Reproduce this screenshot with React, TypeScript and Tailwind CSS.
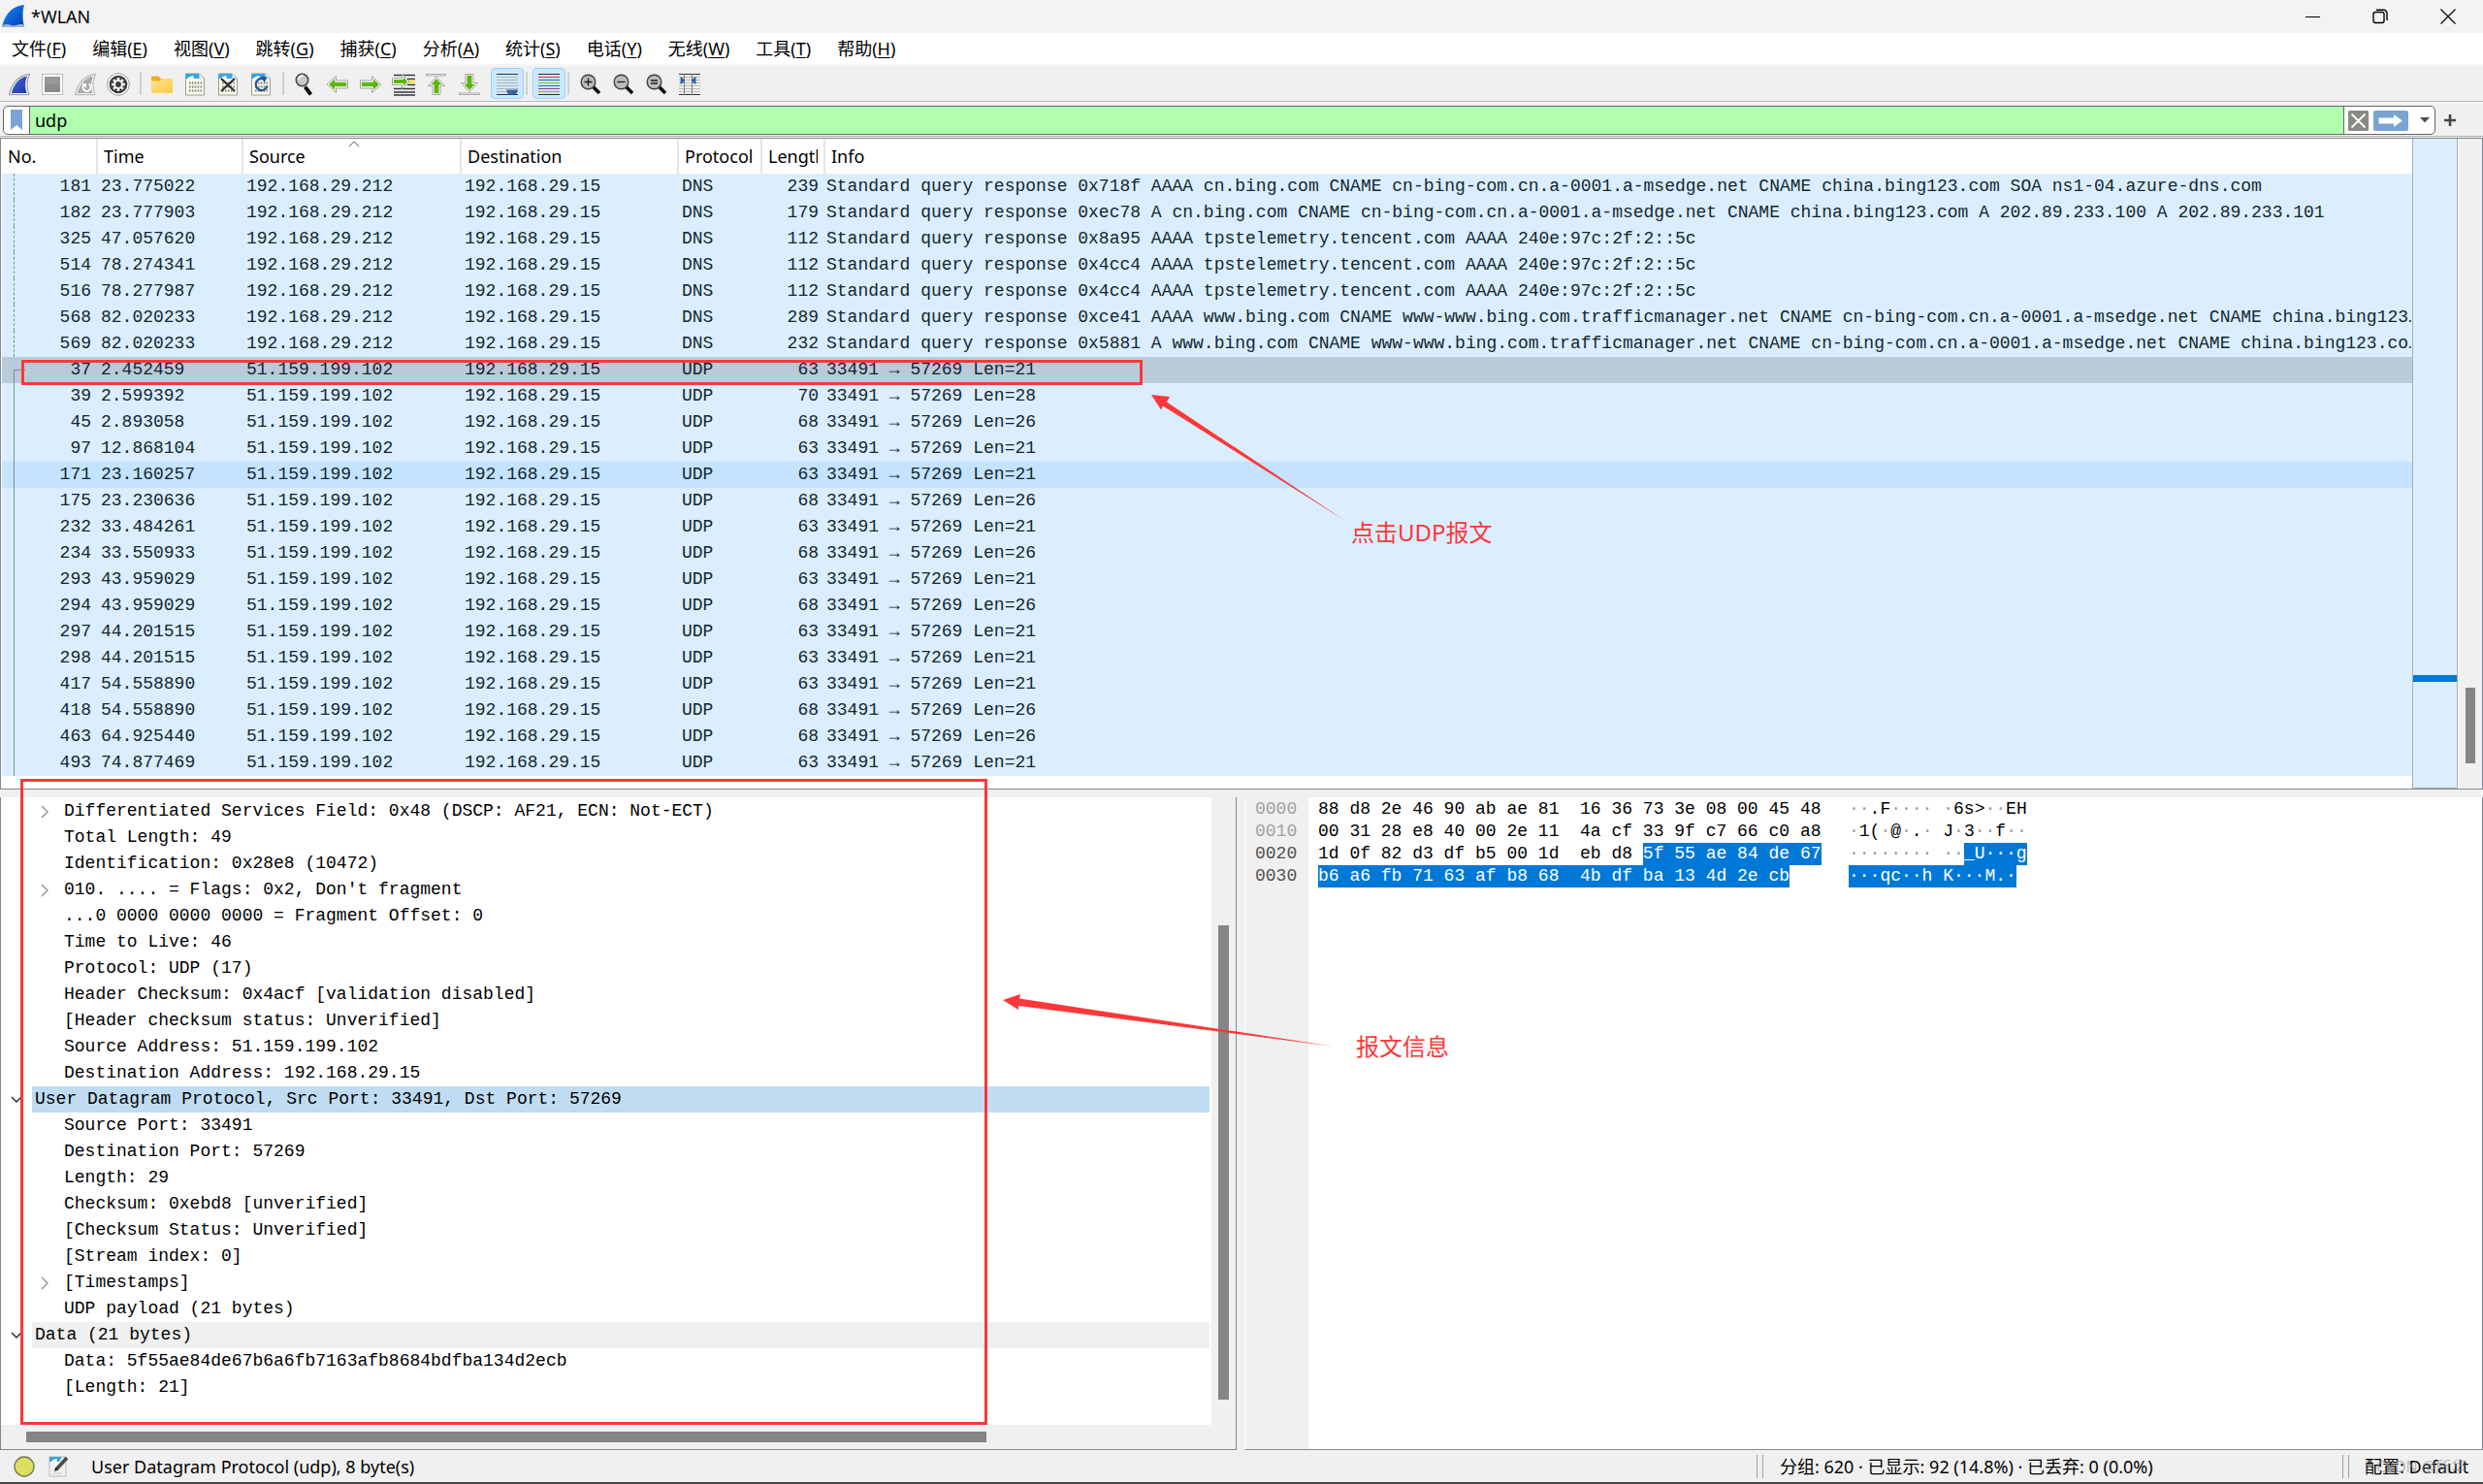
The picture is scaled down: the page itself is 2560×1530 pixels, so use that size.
import React from "react";

const UI = "font-['Noto_Sans','Noto_Sans_CJK_SC',sans-serif]";
const MONO = "font-['Liberation_Mono','DejaVu_Sans_Mono',monospace]";

const menus: [string, string][] = [
  ["文件", "F"], ["编辑", "E"], ["视图", "V"], ["跳转", "G"], ["捕获", "C"], ["分析", "A"],
  ["统计", "S"], ["电话", "Y"], ["无线", "W"], ["工具", "T"], ["帮助", "H"],
];

type Packet = { no: number; time: string; src: string; proto: string; len: number; info: string };

const dns = (no: number, time: string, len: number, info: string): Packet => ({
  no, time, src: "192.168.29.212", proto: "DNS", len, info: `Standard query response ${info}`,
});
const udp = (no: number, time: string, len: number): Packet => ({
  no, time, src: "51.159.199.102", proto: "UDP", len, info: `33491 → 57269 Len=${len - 42}`,
});

const packets: Packet[] = [
  dns(181, "23.775022", 239, "0x718f AAAA cn.bing.com CNAME cn-bing-com.cn.a-0001.a-msedge.net CNAME china.bing123.com SOA ns1-04.azure-dns.com"),
  dns(182, "23.777903", 179, "0xec78 A cn.bing.com CNAME cn-bing-com.cn.a-0001.a-msedge.net CNAME china.bing123.com A 202.89.233.100 A 202.89.233.101"),
  dns(325, "47.057620", 112, "0x8a95 AAAA tpstelemetry.tencent.com AAAA 240e:97c:2f:2::5c"),
  dns(514, "78.274341", 112, "0x4cc4 AAAA tpstelemetry.tencent.com AAAA 240e:97c:2f:2::5c"),
  dns(516, "78.277987", 112, "0x4cc4 AAAA tpstelemetry.tencent.com AAAA 240e:97c:2f:2::5c"),
  dns(568, "82.020233", 289, "0xce41 AAAA www.bing.com CNAME www-www.bing.com.trafficmanager.net CNAME cn-bing-com.cn.a-0001.a-msedge.net CNAME china.bing123…"),
  dns(569, "82.020233", 232, "0x5881 A www.bing.com CNAME www-www.bing.com.trafficmanager.net CNAME cn-bing-com.cn.a-0001.a-msedge.net CNAME china.bing123.co…"),
  udp(37, "2.452459", 63), udp(39, "2.599392", 70), udp(45, "2.893058", 68), udp(97, "12.868104", 63),
  udp(171, "23.160257", 63), udp(175, "23.230636", 68), udp(232, "33.484261", 63), udp(234, "33.550933", 68),
  udp(293, "43.959029", 63), udp(294, "43.959029", 68), udp(297, "44.201515", 63), udp(298, "44.201515", 63),
  udp(417, "54.558890", 63), udp(418, "54.558890", 68), udp(463, "64.925440", 68), udp(493, "74.877469", 63),
];

type Node = { text: string; top?: boolean; closed?: boolean; bg?: string };
const details: Node[] = [
  { text: "Differentiated Services Field: 0x48 (DSCP: AF21, ECN: Not-ECT)", closed: true },
  { text: "Total Length: 49" },
  { text: "Identification: 0x28e8 (10472)" },
  { text: "010. .... = Flags: 0x2, Don't fragment", closed: true },
  { text: "...0 0000 0000 0000 = Fragment Offset: 0" },
  { text: "Time to Live: 46" },
  { text: "Protocol: UDP (17)" },
  { text: "Header Checksum: 0x4acf [validation disabled]" },
  { text: "[Header checksum status: Unverified]" },
  { text: "Source Address: 51.159.199.102" },
  { text: "Destination Address: 192.168.29.15" },
  { text: "User Datagram Protocol, Src Port: 33491, Dst Port: 57269", top: true, bg: "bg-[#c0dcf3]" },
  { text: "Source Port: 33491" },
  { text: "Destination Port: 57269" },
  { text: "Length: 29" },
  { text: "Checksum: 0xebd8 [unverified]" },
  { text: "[Checksum Status: Unverified]" },
  { text: "[Stream index: 0]" },
  { text: "[Timestamps]", closed: true },
  { text: "UDP payload (21 bytes)" },
  { text: "Data (21 bytes)", top: true, bg: "bg-[#f0f0f0]" },
  { text: "Data: 5f55ae84de67b6a6fb7163afb8684bdfba134d2ecb" },
  { text: "[Length: 21]" },
];

/* Each dump line: offset, plain hex, selected hex, plain text, selected text */
const dump: [string, string, string, string, string][] = [
  ["0000", "88 d8 2e 46 90 ab ae 81  16 36 73 3e 08 00 45 48", "", "··.F···· ·6s>··EH", ""],
  ["0010", "00 31 28 e8 40 00 2e 11  4a cf 33 9f c7 66 c0 a8", "", "·1(·@·.· J·3··f··", ""],
  ["0020", "1d 0f 82 d3 df b5 00 1d  eb d8 ", "5f 55 ae 84 de 67", "········ ··", "_U···g"],
  ["0030", "", "b6 a6 fb 71 63 af b8 68  4b df ba 13 4d 2e cb", "", "···qc··h K···M.·"],
];

const Svg = ({ children, w = 24, h = 24 }: { children: React.ReactNode; w?: number; h?: number }) => (
  <svg width={w} height={h} viewBox={`0 0 ${w} ${h}`} fill="none" aria-hidden="true" className="shrink-0">{children}</svg>
);

const FIN = "M1.5 22.5C4 12.500 9 3 22.500 1.500C19.500 8 19 15 22 22.500Z";

const FinIcon = () => (
  <Svg>
    <defs><linearGradient id="fin" x1="0" y1="0" x2="1" y2="1"><stop offset="0" stopColor="#5b7fe0" /><stop offset=".5" stopColor="#2f4fc0" /><stop offset="1" stopColor="#2236a8" /></linearGradient></defs>
    <path d={FIN} fill="#fff" stroke="#a9a9a9" strokeWidth="1.300" strokeLinejoin="round" />
    <path d="M3.800 21C6 12.500 11 5 20 3.400C17.500 9.500 17.500 15 19.600 21Z" fill="url(#fin)" />
  </Svg>
);
const StopIcon = () => (
  <Svg>
    <rect x="1.500" y="1.500" width="21" height="21" fill="#fff" stroke="#bdbdbd" />
    <rect x="4" y="4" width="16" height="16" fill="#8c8c8c" />
    <path d="M4 4h16v8H4z" fill="#979797" />
  </Svg>
);
const RestartIcon = () => (
  <Svg>
    <path d={FIN} fill="#fff" stroke="#bdbdbd" strokeWidth="1.300" strokeLinejoin="round" />
    <path d="M3.800 21C6 12.500 11 5 20 3.400C17.500 9.500 17.500 15 19.600 21Z" fill="#a9a9a9" />
    <path d="M15.500 11.500a4 4 0 1 1-5.500 1.500" stroke="#fff" strokeWidth="2" />
    <path d="M8 11h5v5z" fill="#fff" />
  </Svg>
);
const GearIcon = () => (
  <Svg>
    <circle cx="12" cy="12" r="11.300" fill="#fff" stroke="#999" />
    <circle cx="12" cy="12" r="9.300" fill="#3a3d3e" />
    <g stroke="#f2f2f2" strokeWidth="2.600">
      <path d="M12 5v14M5 12h14M7.050 7.050l9.900 9.900M16.950 7.050l-9.900 9.900" />
    </g>
    <circle cx="12" cy="12" r="5" fill="#f2f2f2" />
    <circle cx="12" cy="12" r="2.900" fill="#3a3d3e" />
  </Svg>
);
const FolderIcon = () => (
  <Svg>
    <path d="M1 4.500Q1 3.500 2 3.500h6.500l2.500 3H22q1 0 1 1V11H1z" fill="#f0ab1c" />
    <defs><linearGradient id="fold" x1="0" y1="0" x2="1" y2="1"><stop offset="0" stopColor="#ffe597" /><stop offset="1" stopColor="#ffca3e" /></linearGradient></defs>
    <path d="M1 8.500h8.500l2-2H22q1 0 1 1V20q0 1-1 1H2q-1 0-1-1z" fill="url(#fold)" />
  </Svg>
);
const FileBase = ({ children }: { children?: React.ReactNode }) => (
  <Svg>
    <path d="M2.500 1h14l5 5v17h-19z" fill="#fdfdea" stroke="#9b9b94" />
    <path d="M2.500 1h14l5 5H2.500z" fill="#35a7df" />
    <path d="M16.500 1v5h5z" fill="#e8f4fb" stroke="#a9c4cf" strokeWidth=".6" />
    <path d="M4 6c2-2 5-3 7-3-1 1-1 2 0 3z" fill="#fff" />
    <g stroke="#8d8f86" strokeWidth="2.600" strokeDasharray="1.600 1.300">
      <path d="M6 10.500h13M6 14.500h13M6 18.500h13" />
    </g>
    {children}
  </Svg>
);
const CloseFileIcon = () => <FileBase><path d="M5 6l14 13M19 6L5 19" stroke="#2b3134" strokeWidth="2.200" /></FileBase>;
const ReloadIcon = () => (
  <FileBase>
    <path d="M16.500 7.500a6 6 0 1 0 2 6" stroke="#27509b" strokeWidth="2.300" />
    <path d="M12.500 3.500l6 1-3 6z" fill="#27509b" />
  </FileBase>
);
const FindIcon = () => (
  <Svg>
    <path d="M12.500 14.500l6 8" stroke="#0b0b0b" strokeWidth="3.800" />
    <circle cx="9.500" cy="7.500" r="6.200" fill="#c9c9c9" stroke="#454545" strokeWidth="1.600" />
    <path d="M5.500 7a4 4 0 0 1 5-3.700" stroke="#fff" strokeWidth="1.800" />
  </Svg>
);
const ArrowG = ({ d, inner }: { d: string; inner: string }) => (
  <>
    <path d={d} fill="#fff" stroke="#a2a2a2" strokeLinejoin="round" />
    <path d={inner} fill="#5fb512" />
  </>
);
const PrevIcon = () => <Svg><ArrowG d="M1 12L10.500 3.500v4.500H22.500v8H10.500v4.500z" inner="M3 12L9.200 6.300V9.700H21.200v4.600H9.200v3.400z" /></Svg>;
const NextIcon = () => <Svg><ArrowG d="M23 12L13.500 3.500v4.500H1.500v8h12v4.500z" inner="M21 12L14.800 6.300V9.700H2.800v4.600h12v3.400z" /></Svg>;
const GotoIcon = () => (
  <Svg>
    <path d="M2 2.500h22M16 6.500h8M16 12.500h8M2 16.500h22M2 20h22M2 23h22" stroke="#33383b" strokeWidth="1.400" />
    <path d="M16 9h8" stroke="#fbe04a" strokeWidth="3" />
    <ArrowG d="M18 9L10.500 1.500v4H.5v7h10v4z" inner="M16.200 9L11.800 4.300V7H1.800v4h10v2.700z" />
  </Svg>
);
const TopIcon = () => (
  <Svg>
    <rect x="1.500" y="1.500" width="20" height="1.500" fill="#fff" stroke="#999" strokeWidth=".8" />
    <ArrowG d="M12 4L3.500 13.500h4.500v9h8v-9h4.500z" inner="M12 6L6.300 12.200h3.200v9h5v-9h3.200z" />
  </Svg>
);
const BottomIcon = () => (
  <Svg>
    <rect x="1.500" y="21" width="21" height="1.500" fill="#fff" stroke="#999" strokeWidth=".8" />
    <ArrowG d="M12 20L3.500 10.500h4.500v-9h8v9h4.500z" inner="M12 18L6.300 11.800h3.200V2.800h5v9h3.200z" />
  </Svg>
);
const ScrollIcon = () => (
  <Svg>
    <path d="M1 1.500h22M1 22.500h22" stroke="#2c3236" />
    <path d="M1 4.500h22M1 7.500h22M1 10.500h22M1 13.500h22M1 16.500h22M1 19.500h22" stroke="#b3b5ae" />
    <path d="M11 17.500h12q-1 5-4 5h-4q-3 0-4-5z" fill="#3465a4" />
  </Svg>
);
const ColorIcon = () => (
  <Svg>
    <path d="M1 1.500h22M1 22.500h22" stroke="#2c3236" />
    <path d="M1 4.500h22" stroke="#ef2929" />
    <path d="M1 7.500h22M1 13.500h22" stroke="#3465a4" />
    <path d="M1 10.500h22" stroke="#73d216" />
    <path d="M1 16.500h22" stroke="#75507b" />
    <path d="M1 19.500h22" stroke="#c4a000" />
  </Svg>
);
const Zoom = ({ d }: { d: string }) => (
  <Svg>
    <path d="M14.500 14.500l6.500 6.500" stroke="#0b0b0b" strokeWidth="3.600" />
    <circle cx="9.500" cy="9.500" r="7.300" fill="#bcbcbc" stroke="#3d3d3d" strokeWidth="1.400" />
    <path d={d} stroke="#1d1d1d" strokeWidth="1.300" />
  </Svg>
);
const ResizeIcon = () => (
  <Svg>
    <path d="M1 1.500h22M1 22.500h22" stroke="#2c3236" />
    <path d="M1 4.500h22M1 7.500h22M1 10.500h22M1 13.500h22M1 16.500h22M1 19.500h22" stroke="#b9bbb4" />
    <path d="M6.500 1v22M14.500 1v22" stroke="#7c7f7a" />
    <path d="M3 4.500l4 3.500-4 3.500zM18 4.500l-4 3.500 4 3.500z" fill="#3465a4" stroke="#3465a4" />
  </Svg>
);

const Tool = ({ label, children, on }: { label: string; children: React.ReactNode; on?: boolean }) => (
  <button
    type="button"
    aria-label={label}
    aria-pressed={on}
    className={`flex h-8 w-[34px] items-center justify-center pt-0.5 ${on ? "rounded-sm border border-[#99d1ff] bg-[#cce8ff]" : ""}`}
  >
    {children}
  </button>
);
const Sep = ({ tight }: { tight?: boolean }) => <span className={`h-6 w-0.5 bg-[#d0d0d0] ${tight ? "mr-[5px] ml-0.5" : "mr-1 ml-[5px]"}`} />;

const Th = ({ children, sorted }: { children: React.ReactNode; sorted?: boolean }) => (
  <th scope="col" aria-sort={sorted ? "ascending" : undefined} className="relative h-9 overflow-hidden border-r-2 border-[#e5e5e5] px-1.5 text-left font-normal last:border-r-0">
    {sorted && (
      <svg width="12" height="7" viewBox="0 0 12 7" fill="none" className="absolute top-0.5 left-1/2 -ml-1" aria-hidden="true">
        <path d="M1 6l5-5 5 5" stroke="#5c5c5c" />
      </svg>
    )}
    <div className="overflow-hidden whitespace-nowrap">{children}</div>
  </th>
);

const Glyphs = ({ text }: { text: string }) => (
  <>
    {text.split(/(·+)/).map((part, i) => (
      <span key={i} className={part.startsWith("·") ? "text-[#9a9a9a]" : ""}>{part}</span>
    ))}
  </>
);

function PacketList() {
  return (
    <section aria-label="Packet list" className="flex border border-[#828790] bg-white pl-px">
      <div className="min-w-0 flex-1 pb-[13px]">
        <table className={`w-full table-fixed border-collapse ${MONO} text-[18px] leading-[27px] text-[#12272e]`}>
          <colgroup>
            <col className="w-[98px]" /><col className="w-[150px]" /><col className="w-[225px]" /><col className="w-[224px]" />
            <col className="w-[86px]" /><col className="w-[65px]" /><col />
          </colgroup>
          <thead className={`${UI} text-[18px] text-black`}>
            <tr>
              <Th>No.</Th><Th>Time</Th><Th sorted>Source</Th><Th>Destination</Th><Th>Protocol</Th><Th>Length</Th><Th>Info</Th>
            </tr>
          </thead>
          <tbody>
            {packets.map((p) => {
              const bg = p.no === 37 ? "bg-[#b9cbd9]" : p.no === 171 ? "bg-[#c4e3ff]" : "bg-[#daeeff]";
              const line =
                p.proto === "DNS" ? "inset-y-0 border-l border-dashed"
                : p.no === 37 ? "top-[13px] bottom-0 w-3 border-l border-t"
                : "inset-y-0 border-l";
              return (
                <tr key={p.no} className={bg}>
                  <td className="relative h-[27px] pr-1.5 text-right">
                    <span className={`absolute left-3 border-[#7f8d96] ${line}`} />
                    {p.no}
                  </td>
                  <td className="pl-1">{p.time}</td>
                  <td className="pl-1">{p.src}</td>
                  <td className="pl-1">192.168.29.15</td>
                  <td className="pl-1">{p.proto}</td>
                  <td className="pr-1.5 text-right">{p.len}</td>
                  <td className="pl-0.5 whitespace-pre">{p.info}</td>
                </tr>
              );
            })}
          </tbody>
        </table>
      </div>
      <div className="flex w-[47px] flex-col border border-t-0 border-[#acacac] bg-[#daeeff]">
        <div className="flex-[553]" />
        <div className="h-[7px] bg-[#0078d7]" />
        <div className="flex-[109]" />
      </div>
      <div className="ml-px flex w-6 flex-col items-center bg-[#f0f0f0]">
        <div className="flex-[566]" />
        <div className="h-[78px] w-2.5 bg-[#858585]" />
        <div className="flex-[26]" />
      </div>
    </section>
  );
}

function Details() {
  return (
    <section aria-label="Packet details" className="flex w-1/2 max-w-[1275px] flex-col border-r border-b border-l border-[#828790] bg-white">
      <div className="flex flex-1">
        <ul className={`min-w-0 flex-1 pt-px pl-1 ${MONO} text-[18px] leading-[27px] text-black`}>
          {details.map((n) => (
            <li key={n.text} className="flex h-[27px] items-center">
              {n.top ? (
                <>
                  <button type="button" aria-label="Collapse" className="flex w-7 justify-center pr-1">
                    <svg width="12" height="8" viewBox="0 0 12 8" fill="none"><path d="M1 1l5 5 5-5" stroke="#2b2b2b" strokeWidth="1.500" /></svg>
                  </button>
                  <span className={`h-[27px] flex-1 pl-[3px] whitespace-pre ${n.bg}`}>{n.text}</span>
                </>
              ) : (
                <>
                  <span className="flex w-[61px] justify-end pr-4">
                    {n.closed && (
                      <button type="button" aria-label="Expand">
                        <svg width="8" height="14" viewBox="0 0 8 14" fill="none"><path d="M1 1l6 6-6 6" stroke="#999" strokeWidth="1.500" /></svg>
                      </button>
                    )}
                  </span>
                  <span className="whitespace-pre">{n.text}</span>
                </>
              )}
            </li>
          ))}
        </ul>
        <div className="ml-0.5 flex w-[25px] flex-col bg-[#f0f0f0] pl-[7px]">
          <div className="flex-[132]" />
          <div className="w-[11px] flex-[488] bg-[#858585]" />
          <div className="flex-[26]" />
        </div>
      </div>
      <div className="flex h-[25px] items-center bg-[#f0f0f0] pl-[26px]">
        <div className="h-[11px] w-[990px] bg-[#858585]" />
      </div>
    </section>
  );
}

function HexView() {
  return (
    <section aria-label="Packet bytes" className={`flex flex-1 border-r border-b border-l border-[#828790] border-l-white bg-white ${MONO} text-[18px] leading-[23px] text-black`}>
      <div className="w-[65px] bg-[#f0f0f0] pt-px pl-2.5">
        {dump.map((r, i) => <div key={r[0]} className={i < 2 ? "text-[#a0a0a0]" : "text-[#505050]"}>{r[0]}</div>)}
      </div>
      <div className="w-[549px] pt-px pl-2.5 whitespace-pre">
        {dump.map((r) => (
          <div key={r[0]} className="flex h-[23px]">
            <span>{r[1]}</span><span className="bg-[#0078d7] text-white">{r[2]}</span>
          </div>
        ))}
      </div>
      <div className="pt-px pl-2 whitespace-pre">
        {dump.map((r) => (
          <div key={r[0]} className="flex h-[23px]">
            <span><Glyphs text={r[3]} /></span><span className="bg-[#0078d7] text-white">{r[4]}</span>
          </div>
        ))}
      </div>
    </section>
  );
}

const Grip = () => <span className="flex h-6 w-[7px] border-x border-[#a0a0a0]" />;

export default function App() {
  return (
    <div className={`relative flex min-h-screen flex-col overflow-hidden bg-[#f0f0f0] ${UI} text-[18px] leading-6 text-black`}>
      <header className="flex h-[34px] items-center bg-[#f3f3f3]">
        <svg width="26" height="26" viewBox="0 0 26 26" className="ml-0.5" aria-hidden="true">
          <defs><linearGradient id="logo" x1="0" y1="0" x2="1" y2="1"><stop offset="0" stopColor="#2a8cf0" /><stop offset=".6" stopColor="#0a5bd0" /><stop offset="1" stopColor="#063a9c" /></linearGradient></defs>
          <path d="M0 24C3 11 10 2 23 1c-2 6-2 15 0 23z" fill="url(#logo)" />
          <path d="M1 22q4-2 8 0 4 1 7-.500 4-1 7 .5V24H0z" fill="#9db4d6" />
        </svg>
        <h1 className="ml-1">*WLAN</h1>
        <div className="mr-[23px] ml-auto flex items-center gap-11">
          <button type="button" aria-label="Minimize" className="flex w-[26px] justify-center"><svg width="15" height="15" viewBox="0 0 15 15"><path d="M0 7.500h15" stroke="#000" /></svg></button>
          <button type="button" aria-label="Restore" className="flex w-[26px] justify-center">
            <svg width="16" height="16" viewBox="0 0 16 16" fill="none" stroke="#000" strokeWidth="1.400"><rect x="1" y="3.500" width="11" height="11" rx="2" /><path d="M4 1.200h7.500a3.500 3.500 0 0 1 3.500 3.500V12" /></svg>
          </button>
          <button type="button" aria-label="Close" className="flex w-[26px] justify-center"><svg width="16" height="16" viewBox="0 0 16 16"><path d="M.5.5l15 15M15.500.5l-15 15" stroke="#000" strokeWidth="1.200" /></svg></button>
        </div>
      </header>

      <nav className="flex h-8 items-center gap-[27px] bg-white pl-3">
        {menus.map(([name, key]) => (
          <button type="button" key={key}>{name}(<span className="underline underline-offset-2">{key}</span>)</button>
        ))}
      </nav>

      <div role="toolbar" aria-label="Main toolbar" className="flex h-[39px] items-center border-t-2 border-b border-t-[#f6f6f6] border-b-[#b4b4b4] pl-[3px]">
        <Tool label="Start capture"><FinIcon /></Tool>
        <Tool label="Stop capture"><StopIcon /></Tool>
        <Tool label="Restart capture"><RestartIcon /></Tool>
        <Tool label="Capture options"><GearIcon /></Tool>
        <Sep />
        <Tool label="Open"><FolderIcon /></Tool>
        <Tool label="Save"><FileBase /></Tool>
        <Tool label="Close file"><CloseFileIcon /></Tool>
        <Tool label="Reload"><ReloadIcon /></Tool>
        <Sep />
        <Tool label="Find packet"><FindIcon /></Tool>
        <Tool label="Previous packet"><PrevIcon /></Tool>
        <Tool label="Next packet"><NextIcon /></Tool>
        <Tool label="Go to packet"><GotoIcon /></Tool>
        <Tool label="First packet"><TopIcon /></Tool>
        <Tool label="Last packet"><BottomIcon /></Tool>
        <span className="w-[5px]" />
        <Tool label="Auto scroll" on><ScrollIcon /></Tool>
        <Sep tight />
        <Tool label="Colorize" on><ColorIcon /></Tool>
        <Sep tight />
        <Tool label="Zoom in"><Zoom d="M5.500 9.500h8M9.500 5.500v8" /></Tool>
        <Tool label="Zoom out"><Zoom d="M5.500 9.500h8" /></Tool>
        <Tool label="Normal size"><Zoom d="M6 8h7M6 11h7" /></Tool>
        <Tool label="Resize columns"><ResizeIcon /></Tool>
      </div>

      <div className="flex h-9 items-end border-t-2 border-b border-t-[#f8f8f8] border-b-[#b4b4b4] pr-7 pb-px pl-[3px]">
        <div className="flex h-[30px] flex-1 items-stretch overflow-hidden rounded-[5px] border border-[#666] bg-white">
          <button type="button" aria-label="Bookmarks" className="flex w-[27px] items-center justify-center border-r border-[#666]">
            <svg width="14" height="22" viewBox="0 0 14 22"><path d="M1 0h12v21l-6-5-6 5z" fill="#7ba4d4" /></svg>
          </button>
          <input aria-label="Display filter" defaultValue="udp" className="min-w-0 flex-1 bg-[#afffaf] px-[5px] outline-none" />
          <div className="flex w-[94px] items-center border-l border-[#666] pl-1">
            <button type="button" aria-label="Clear filter"><svg width="21" height="21" viewBox="0 0 21 21"><rect width="21" height="21" rx="1.500" fill="#888a85" /><path d="M3.500 3.500l14 14M17.500 3.500l-14 14" stroke="#fff" strokeWidth="1.800" /></svg></button>
            <button type="button" aria-label="Apply filter" className="ml-[5px]"><svg width="36" height="21" viewBox="0 0 36 21"><rect width="36" height="21" rx="2" fill="#7aa3d3" /><path d="M5.500 7.500h15.500V4l9 6.500-9 6.500v-3.500H5.500z" fill="#fff" /></svg></button>
            <button type="button" aria-label="Filter history" className="ml-3"><svg width="10" height="6" viewBox="0 0 10 6"><path d="M0 0h10L5 5.500z" fill="#505050" /></svg></button>
          </div>
        </div>
        <button type="button" aria-label="Add filter button" className="ml-[9px] flex h-[30px] items-center"><svg width="12" height="12" viewBox="0 0 12 12"><path d="M6 0v12M0 6h12" stroke="#454545" strokeWidth="2.600" /></svg></button>
      </div>

      <main className="mt-px flex flex-1 flex-col gap-2">
        <PacketList />
        <div className="flex flex-1 gap-2">
          <Details />
          <HexView />
        </div>
      </main>

      <footer className="flex h-[35px] items-center border-b-2 border-[#454545]">
        <button type="button" aria-label="Expert information" className="ml-3.5"><svg width="22" height="22" viewBox="0 0 22 22"><circle cx="11" cy="11" r="10" fill="#dedd60" stroke="#75754a" strokeWidth="1.300" /></svg></button>
        <button type="button" aria-label="Capture comment" className="ml-3.5">
          <svg width="22" height="22" viewBox="0 0 22 22"><path d="M1 1h17v20H1z" fill="#f2f2ee" stroke="#bbb" /><path d="M1 1h13l-3 5H1z" fill="#3aa5dc" /><path d="M3 6q2-3 6-3-1 2 0 4z" fill="#fff" /><path d="M19 2L8 14" stroke="#4a4a4a" strokeWidth="3.600" /><path d="M6 16l1-4 3 2.500z" fill="#222" /><path d="M4 18h11" stroke="#c8c8c8" /></svg>
        </button>
        <span className="ml-[22px] flex-1">User Datagram Protocol (udp), 8 byte(s)</span>
        <Grip />
        <span className="ml-[17px] w-[580px]">分组: 620 · 已显示: 92 (14.8%) · 已丢弃: 0 (0.0%)</span>
        <Grip />
        <span className="relative ml-4 w-[122px] whitespace-nowrap">
          配置: Default
          <span className="absolute top-0 left-3 text-base text-[#8a8a8a]/60">CSDN @所华</span>
        </span>
      </footer>

      <div className="pointer-events-none absolute top-[371px] left-[22px] h-[26px] w-[1156px] border-3 border-[#fc3838]" />
      <div className="pointer-events-none absolute top-[803px] left-[21px] h-[666px] w-[997px] border-3 border-[#fc3838]" />
      <svg width="210" height="140" viewBox="0 0 210 140" className="pointer-events-none absolute top-[400px] left-[1180px]" aria-hidden="true"><path d="M7 7l19 2-3 5.500L207 137 19 18.500l-2 4z" fill="#fc3838" /></svg>
      <svg width="350" height="64" viewBox="0 0 350 64" className="pointer-events-none absolute top-[1020px] left-[1030px]" aria-hidden="true"><path d="M4 11l18-6-1 4.500L346 59 20 17v4z" fill="#fc3838" /></svg>
      <p className="absolute top-[533px] left-[1393px] text-[24px] leading-8 text-[#fc3838]">点击UDP报文</p>
      <p className="absolute top-[1063px] left-[1398px] text-[24px] leading-8 text-[#fc3838]">报文信息</p>
    </div>
  );
}
